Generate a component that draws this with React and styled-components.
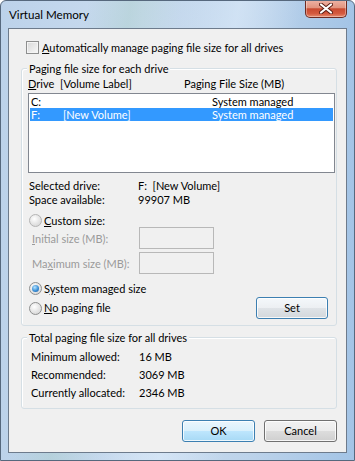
import React from 'react';
import styled, { createGlobalStyle } from 'styled-components';

const GlobalStyle = createGlobalStyle`
  html, body { margin: 0; padding: 0; background: #fff; overflow: hidden; }
  body { font-family: Lato, "Noto Sans", sans-serif; font-size: 11px; color: #000; }
`;

const Window = styled.div`
  width: 355px;
  height: 461px;
  box-sizing: border-box;
  display: flex;
  flex-direction: column;
  border: 1px solid #56687d;
  border-radius: 6px 6px 0 0;
  padding: 0 7px 7px;
  overflow: hidden;
  background:
    linear-gradient(100deg, rgba(255,255,255,0) 20%, rgba(160,200,190,0.35) 30%, rgba(255,255,255,0) 42%, rgba(220,235,250,0.6) 55%, rgba(255,255,255,0) 70%),
    linear-gradient(to right, #bcd2ea 0%, #cadcef 40%, #bdd3ea 70%, #a3c4e6 100%);
`;

const TitleBar = styled.div`
  height: 27px;
  display: flex;
  justify-content: space-between;
  align-items: flex-start;
`;

const Title = styled.div`
  padding: 6px 0 0 1px;
  line-height: 15px;
  font-size: 11.6px;
`;

const CloseButton = styled.div`
  width: 42px;
  height: 18px;
  margin-top: -1px;
  box-sizing: border-box;
  border: 1px solid #6e2b22;
  border-top: none;
  border-radius: 0 0 5px 5px;
  display: flex;
  align-items: center;
  justify-content: center;
  background: linear-gradient(to bottom, #eeb4a6 0%, #e2947f 45%, #c84a30 52%, #d45a3f 80%, #e58c70 100%);
  box-shadow: inset 0 0 0 1px rgba(255,255,255,0.35);
`;

const Client = styled.div`
  flex: 1;
  box-sizing: border-box;
  border: 1px solid #6d7b8c;
  background: #f0f0f0;
  padding: 12px 9px 0 12px;
  display: flex;
  flex-direction: column;
`;

const CheckRow = styled.div`
  display: flex;
  align-items: center;
  gap: 3px;
  margin-left: 5px;
  height: 13px;
  line-height: 14px;
`;

const CheckBox = styled.span`
  width: 13px;
  height: 13px;
  box-sizing: border-box;
  border: 1px solid #8e8f8f;
  background: linear-gradient(135deg, #d8d8d8, #f8f8f8);
  box-shadow: inset 0 0 0 1px #f4f4f4;
`;

const GroupBox = styled.div`
  position: relative;
  margin-top: ${p => p.$top}px;
  border: 1px solid #d5dfe5;
  border-radius: 3px;
  box-shadow: inset 1px 1px 0 #fff;
  padding: ${p => p.$pad};
  display: flex;
  flex-direction: column;
`;

const GroupLabel = styled.span`
  position: absolute;
  top: -8px;
  left: 5px;
  padding: 0 2px;
  background: #f0f0f0;
  line-height: 15px;
`;

const ListHeader = styled.div`
  display: grid;
  grid-template-columns: 32px 124px 1fr;
  line-height: 14px;
`;

const ListBox = styled.div`
  margin: 2px 1px 0 0;
  height: 80px;
  box-sizing: border-box;
  border: 1px solid #828790;
  background: #fff;
  padding: 1px;
`;

const ListRow = styled.div`
  display: grid;
  grid-template-columns: 32px 149px 1fr;
  height: 13px;
  line-height: 13px;
  padding-left: 1px;
  background: ${p => (p.$selected ? '#3399ff' : 'transparent')};
  color: ${p => (p.$selected ? '#fff' : '#000')};
`;

const InfoGrid = styled.div`
  display: grid;
  grid-template-columns: ${p => p.$col}px 1fr;
  grid-auto-rows: ${p => p.$row}px;
  align-items: center;
  margin-top: ${p => p.$top}px;
  padding-left: ${p => p.$left}px;
`;

const RadioRow = styled.div`
  display: flex;
  align-items: center;
  gap: 2px;
  height: 13px;
  line-height: 14px;
  margin-top: ${p => p.$top || 0}px;
  padding-left: 1px;
`;

const Radio = styled.span`
  position: relative;
  width: 13px;
  height: 13px;
  box-sizing: border-box;
  border-radius: 50%;
  border: 1px solid ${p => (p.$disabled ? '#b4b4b4' : '#8e8f8f')};
  background: radial-gradient(circle at 40% 35%, #ffffff 0%, #e6e6e6 50%, #cfcfcf 100%);
  &::after {
    content: '';
    display: ${p => (p.$checked ? 'block' : 'none')};
    position: absolute;
    left: 2px;
    top: 2px;
    width: 7px;
    height: 7px;
    border-radius: 50%;
    background: radial-gradient(circle at 40% 35%, #b6e4ff 0%, #3b8fd6 55%, #1c5c9e 100%);
  }
`;

const SizeGrid = styled.div`
  display: grid;
  grid-template-columns: 107px 75px;
  grid-auto-rows: 22px;
  row-gap: 3px;
  align-items: center;
  padding-left: 4px;
  color: #9a9a9a;
`;

const SizeInput = styled.div`
  height: 22px;
  box-sizing: border-box;
  border: 1px solid #b8b8b8;
  background: #f0f0f0;
`;

const BottomRow = styled.div`
  display: flex;
  justify-content: space-between;
  align-items: center;
  margin-top: 2px;
  padding-right: 8px;
`;

const Button = styled.div`
  width: ${p => p.$w}px;
  height: 22px;
  box-sizing: border-box;
  display: flex;
  align-items: center;
  justify-content: center;
  border-radius: 3px;
  border: 1px solid ${p => (p.$variant === 'plain' ? '#707070' : '#3c7fb1')};
  box-shadow: inset 0 0 0 1px rgba(255,255,255,0.8);
  background: ${p =>
    p.$variant === 'primary'
      ? 'linear-gradient(to bottom, #eaf6fd 0%, #d9f0fc 50%, #bee6fd 50%, #a7d9f5 100%)'
      : p.$variant === 'focus'
      ? 'linear-gradient(to bottom, #f4f8fb 0%, #eceff2 50%, #dfe3e7 50%, #d3d8dc 100%)'
      : 'linear-gradient(to bottom, #f2f2f2 0%, #ebebeb 50%, #dddddd 50%, #cfcfcf 100%)'};
  line-height: 14px;
`;

const Footer = styled.div`
  display: flex;
  justify-content: flex-end;
  gap: 9px;
  margin-top: 11px;
`;

const CloseGlyph = () => (
  <svg width="14" height="11" viewBox="0 0 14 11">
    <path d="M2 1.5 L12 9.5 M12 1.5 L2 9.5" stroke="#5a1d14" strokeWidth="4" strokeLinecap="round" />
    <path d="M2 1.5 L12 9.5 M12 1.5 L2 9.5" stroke="#ffffff" strokeWidth="2.2" strokeLinecap="round" />
  </svg>
);

export default function App() {
  return (
    <>
      <GlobalStyle />
      <Window>
        <TitleBar>
          <Title>Virtual Memory</Title>
          <CloseButton>
            <CloseGlyph />
          </CloseButton>
        </TitleBar>
        <Client>
          <CheckRow>
            <CheckBox />
            <span><u>A</u>utomatically manage paging file size for all drives</span>
          </CheckRow>

          <GroupBox $top={14} $pad="8px 0 6px 6px">
            <GroupLabel>Paging file size for each drive</GroupLabel>
            <ListHeader>
              <span><u>D</u>rive</span>
              <span>[Volume Label]</span>
              <span>Paging File Size (MB)</span>
            </ListHeader>
            <ListBox>
              <ListRow>
                <span>C:</span>
                <span></span>
                <span>System managed</span>
              </ListRow>
              <ListRow $selected>
                <span>F:</span>
                <span>[New Volume]</span>
                <span>System managed</span>
              </ListRow>
            </ListBox>

            <InfoGrid $col={109} $row={14} $top={5} $left={1}>
              <span>Selected drive:</span>
              <span>F:&nbsp;&nbsp;[New Volume]</span>
              <span>Space available:</span>
              <span>99907 MB</span>
            </InfoGrid>

            <RadioRow $top={8}>
              <Radio $disabled />
              <span><u>C</u>ustom size:</span>
            </RadioRow>
            <SizeGrid>
              <span><u>I</u>nitial size (MB):</span>
              <SizeInput />
              <span>Ma<u>x</u>imum size (MB):</span>
              <SizeInput />
            </SizeGrid>
            <RadioRow $top={8}>
              <Radio $checked />
              <span>S<u>y</u>stem managed size</span>
            </RadioRow>
            <BottomRow>
              <RadioRow>
                <Radio />
                <span><u>N</u>o paging file</span>
              </RadioRow>
              <Button $w={72} $variant="focus">Set</Button>
            </BottomRow>
          </GroupBox>

          <GroupBox $top={11} $pad="9px 0 7px 9px">
            <GroupLabel>Total paging file size for all drives</GroupLabel>
            <InfoGrid $col={108} $row={18} $top={0} $left={0}>
              <span>Minimum allowed:</span>
              <span>16 MB</span>
              <span>Recommended:</span>
              <span>3069 MB</span>
              <span>Currently allocated:</span>
              <span>2346 MB</span>
            </InfoGrid>
          </GroupBox>

          <Footer>
            <Button $w={73} $variant="primary">OK</Button>
            <Button $w={73} $variant="plain">Cancel</Button>
          </Footer>
        </Client>
      </Window>
    </>
  );
}
